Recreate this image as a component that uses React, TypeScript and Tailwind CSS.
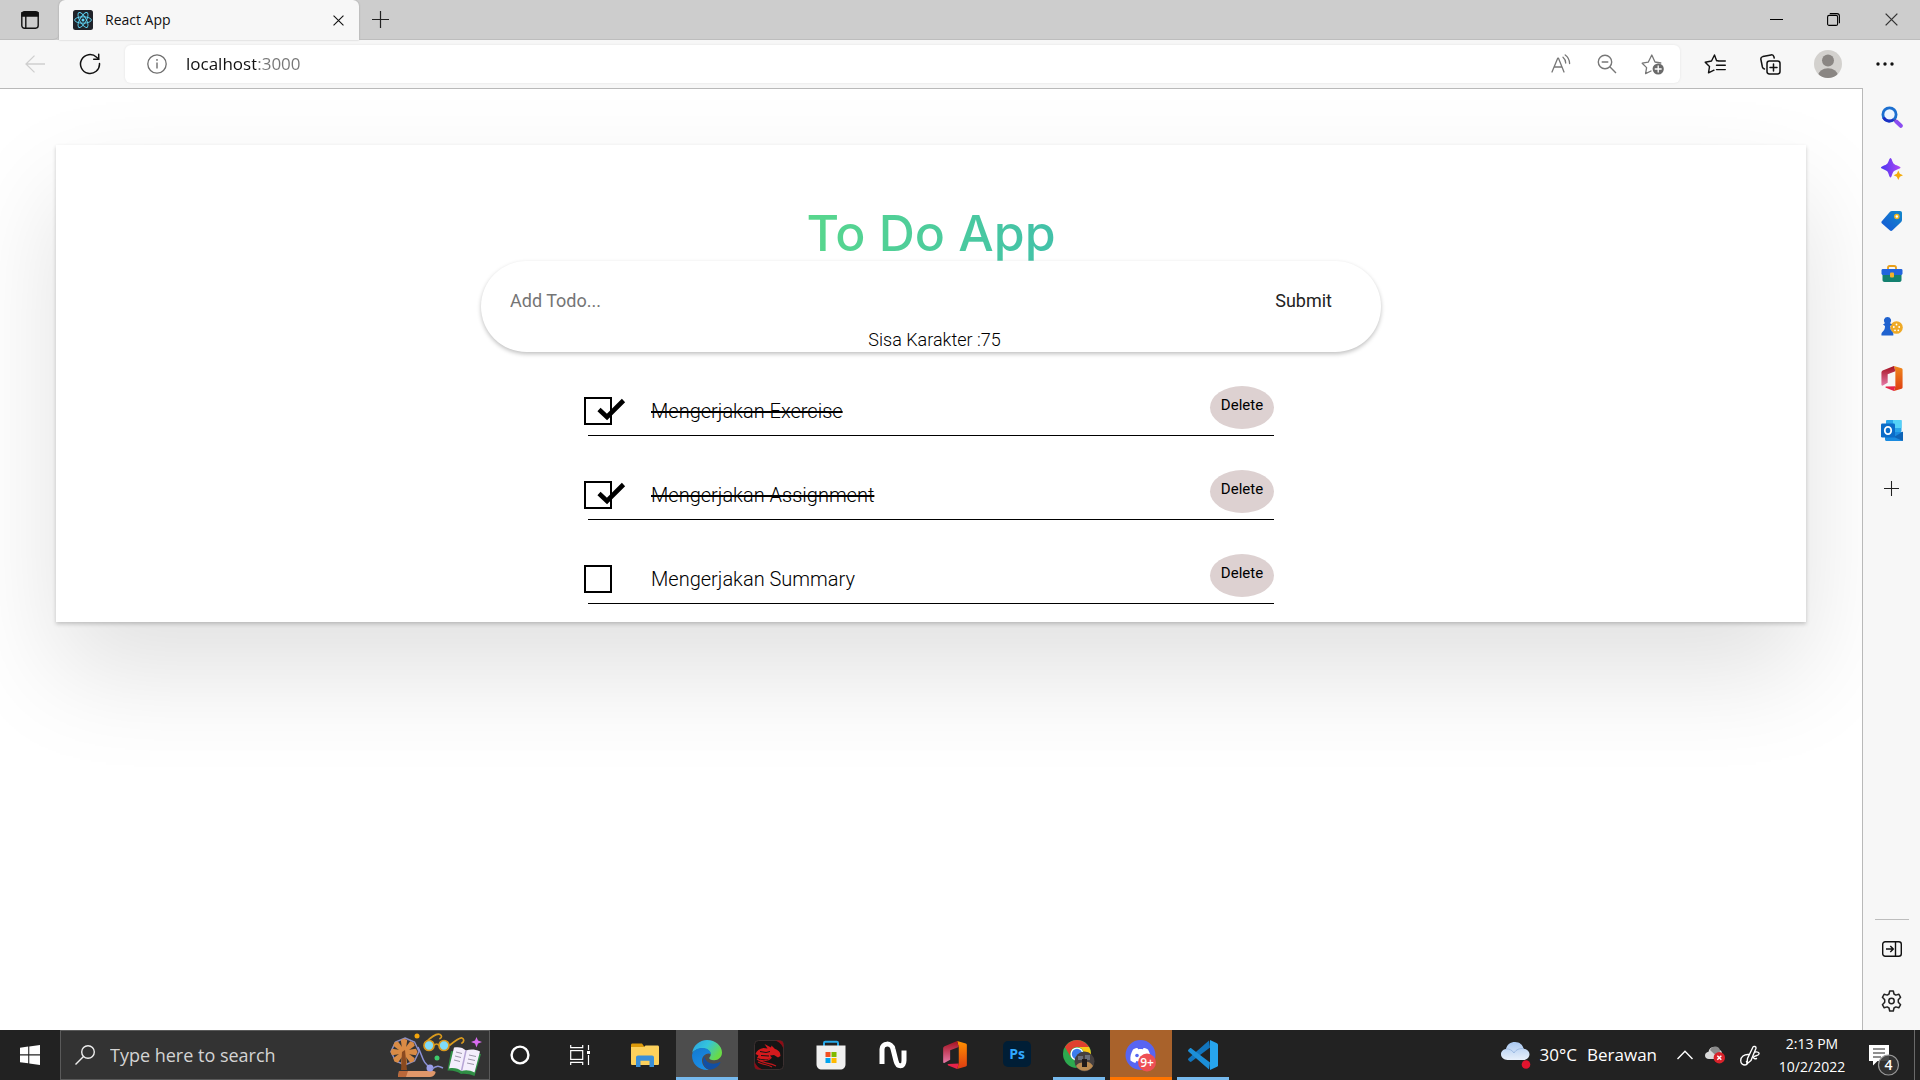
import { useState } from "react";
import type { ReactNode } from "react";

const uiFont = "font-['Open_Sans','Noto_Sans',sans-serif]";

/* ---------- Browser chrome icons ---------- */

function TabActionsIcon() {
  return (
    <svg width="18" height="18" viewBox="0 0 18 18" fill="none" stroke="#111" strokeWidth="1.4">
      <rect x="0.8" y="0.8" width="16.4" height="16.4" rx="2.6" />
      <path d="M1 1.6h16V5H1z" fill="#111" />
      <path d="M4.8 5v12" />
    </svg>
  );
}

function ReactLogo() {
  return (
    <svg width="20" height="20" viewBox="0 0 20 20" fill="none" stroke="#61dafb" strokeWidth="0.9">
      <rect width="20" height="20" rx="2.5" fill="#20232a" stroke="none" />
      <circle cx="10" cy="10" r="1.5" fill="#61dafb" stroke="none" />
      <ellipse cx="10" cy="10" rx="8.4" ry="3.2" />
      <ellipse cx="10" cy="10" rx="8.4" ry="3.2" transform="rotate(60 10 10)" />
      <ellipse cx="10" cy="10" rx="8.4" ry="3.2" transform="rotate(120 10 10)" />
    </svg>
  );
}

function CrossIcon({ size, stroke = "#111" }: { size: number; stroke?: string }) {
  return (
    <svg width={size} height={size} viewBox="0 0 12 12" fill="none" stroke={stroke} strokeWidth="1.2">
      <path d="M0.6 0.6l10.8 10.8M11.4 0.6L0.6 11.4" />
    </svg>
  );
}

function PlusIcon({ size }: { size: number }) {
  return (
    <svg width={size} height={size} viewBox="0 0 17 17" stroke="#222" strokeWidth="1.2">
      <path d="M8.5 0v17M0 8.5h17" />
    </svg>
  );
}

function BackIcon() {
  return (
    <svg width="20" height="18" viewBox="0 0 20 18" fill="none" stroke="#cfcfcf" strokeWidth="1.3">
      <path d="M20 9H1M9.5 0.6L1 9l8.500 8.400" />
    </svg>
  );
}

function RefreshIcon() {
  return (
    <svg width="22" height="22" viewBox="0 0 22 22" fill="none" stroke="#111" strokeWidth="1.5" strokeLinecap="round">
      <path d="M20.500 10.500A9.500 9.500 0 1 1 17.600 4.200L19.600 6" />
      <path d="M19.700 1.200V6.200H14.700" />
    </svg>
  );
}

function InfoIcon() {
  return (
    <svg width="20" height="20" viewBox="0 0 20 20" fill="none" stroke="#6e6e6e" strokeWidth="1.3">
      <circle cx="10" cy="10" r="9.200" />
      <path d="M10 8.600v6" strokeWidth="1.400" />
      <circle cx="10" cy="5.900" r="0.900" fill="#6e6e6e" stroke="none" />
    </svg>
  );
}

function ReadAloudIcon() {
  return (
    <svg width="20" height="20" viewBox="0 0 20 20" fill="none" stroke="#777" strokeWidth="1.3" strokeLinecap="round" strokeLinejoin="round">
      <path d="M1 18L6.700 4.200h0.800L13 18M3.200 13h7.700" />
      <path d="M12 3.200c1.500 1.300 2.600 3.300 2.700 5.800M14.200 1c2.600 1.900 4.300 4.800 4.400 8.500" />
    </svg>
  );
}

function ZoomOutIcon() {
  return (
    <svg width="20" height="20" viewBox="0 0 20 20" fill="none" stroke="#777" strokeWidth="1.4">
      <circle cx="8" cy="8" r="6.700" />
      <path d="M4.700 8h6.600M12.800 12.800L19 19" />
    </svg>
  );
}

function AddFavouriteIcon() {
  return (
    <svg width="24" height="22" viewBox="0 0 24 22" fill="none" stroke="#777" strokeWidth="1.300" strokeLinejoin="round" strokeLinecap="round">
      <path d="M10 18l-5.400 2.600 1-6L1.200 10.200l6-1L10.800 2l3.200 7 5.800 1" />
      <circle cx="17.200" cy="16" r="5.600" fill="#6a6a6a" stroke="none" />
      <path d="M17.200 13v6M14.200 16h6" stroke="#fff" />
    </svg>
  );
}

function FavouritesIcon() {
  return (
    <svg width="22" height="20" viewBox="0 0 22 20" fill="none" stroke="#111" strokeWidth="1.400" strokeLinejoin="round" strokeLinecap="round">
      <path d="M14 6.800h-1.400L10.500 1 7.500 7 1.200 8.200l4.300 4.400-1 6.300 5.500-2.700" />
      <path d="M14.500 7h6.800M12.500 11.300h8.800M12.500 15.600h8.800" />
    </svg>
  );
}

function CollectionsIcon() {
  return (
    <svg width="21" height="21" viewBox="0 0 21 21" fill="none" stroke="#111" strokeWidth="1.500" strokeLinejoin="round" strokeLinecap="round">
      <rect x="7" y="7" width="13" height="13" rx="2.400" />
      <path d="M13.500 10v7M10 13.500h7M4.500 15C3.300 14.800 2.700 14 2.400 13L0.900 5.500C0.600 4 1.300 3 2.800 2.600L11 0.900c1.500-.3 2.500.4 2.900 1.900l.3 1.200" />
    </svg>
  );
}

function ProfileIcon() {
  return (
    <svg width="28" height="28" viewBox="0 0 28 28">
      <clipPath id="avatar"><circle cx="14" cy="14" r="14" /></clipPath>
      <g clipPath="url(#avatar)">
        <rect width="28" height="28" fill="#d3d1ce" />
        <circle cx="14" cy="10.500" r="6" fill="#8a8683" />
        <ellipse cx="14" cy="26" rx="10" ry="7.800" fill="#8a8683" />
      </g>
    </svg>
  );
}

function DotsIcon() {
  return (
    <svg width="18" height="4" viewBox="0 0 18 4" fill="#111">
      <circle cx="2" cy="2" r="1.700" /><circle cx="9" cy="2" r="1.700" /><circle cx="16" cy="2" r="1.700" />
    </svg>
  );
}

/* ---------- Sidebar icons ---------- */

function SideSearch() {
  return (
    <svg width="22" height="22" viewBox="0 0 22 22" fill="none">
      <circle cx="8.500" cy="8.500" r="6.600" fill="#eef6ff" stroke="#1c6fd0" strokeWidth="2.800" />
      <path d="M2.500 11.500a6.600 6.600 0 0 0 10 2" stroke="#1c2fc4" strokeWidth="2.800" />
      <path d="M13.500 14l2 1.800" stroke="#3b3b6e" strokeWidth="2.400" />
      <path d="M15.300 15.500l4.500 4.300" stroke="#8b4cf0" strokeWidth="4" strokeLinecap="round" />
    </svg>
  );
}

function SideSparkle() {
  return (
    <svg width="22" height="22" viewBox="0 0 22 22">
      <defs><linearGradient id="spark" x1="0" y1="0" x2="1" y2="0"><stop offset="0" stopColor="#4a34f0" /><stop offset="1" stopColor="#b04af5" /></linearGradient></defs>
      <path d="M9.500 0c1.300 0 1.700 4 3.300 5.700S19.500 8.200 19.500 9.500s-5 2.200-6.700 3.800-2 6.200-3.300 6.200-1.700-4.600-3.300-6.200S0 10.800 0 9.500s4.600-2.100 6.200-3.800S8.200 0 9.500 0z" fill="url(#spark)" />
      <path d="M17.300 12.500l1.500 3.200 3.200 1.500-3.200 1.500-1.500 3.300-1.500-3.300-3.200-1.500 3.200-1.500z" fill="#f3ab0b" />
    </svg>
  );
}

function SideTag() {
  return (
    <svg width="22" height="22" viewBox="0 0 22 22">
      <defs><linearGradient id="tag" x1="1" y1="0" x2="0" y2="1"><stop offset="0" stopColor="#1388c9" /><stop offset="1" stopColor="#1557d8" /></linearGradient></defs>
      <path d="M11 1h8c1.400 0 2 .7 2 2v7c0 .8-.3 1.500-.8 2l-8.700 8.300c-.8.800-2 .8-2.800 0L1 13.500c-.8-.8-.8-1.700 0-2.500L9 1.800c.5-.5 1.200-.8 2-.8z" fill="url(#tag)" />
      <circle cx="15.800" cy="6.500" r="2" fill="#fff" stroke="#f0b51b" strokeWidth="1.500" />
    </svg>
  );
}

function SideToolbox() {
  return (
    <svg width="22" height="18" viewBox="0 0 22 18">
      <path d="M7 4.500V2.800C7 1.700 7.600 1 8.700 1h4.600C14.400 1 15 1.700 15 2.800v1.700" fill="none" stroke="#e9a01b" strokeWidth="1.800" />
      <path d="M1.500 9h19v6c0 1.300-.8 2-2 2h-15c-1.200 0-2-.7-2-2z" fill="#13806f" />
      <rect x="0.500" y="4" width="21" height="6" rx="1.400" fill="#2164dd" />
      <rect x="9" y="7.500" width="4" height="5" rx="1" fill="#f2b12a" />
    </svg>
  );
}

function SideGames() {
  return (
    <svg width="22" height="19" viewBox="0 0 22 19">
      <circle cx="15.500" cy="10.500" r="6.300" fill="#efaa27" />
      <g fill="#fff"><circle cx="15.500" cy="7.500" r="0.900" /><circle cx="12.800" cy="10" r="0.900" /><circle cx="18.200" cy="10" r="0.900" /><circle cx="14" cy="13.300" r="0.900" /><circle cx="17.300" cy="13.300" r="0.900" /></g>
      <path d="M6.500 0a3.700 3.700 0 0 1 2.600 6.300L11 7.500 9 9c0 3 .8 4.500 2.500 6 .9.900 1 2 .8 3.500H.5C.300 17 .500 16 1.400 15 3.200 13.500 4 12 4 9L2 7.500l1.900-1.200A3.700 3.700 0 0 1 6.500 0z" fill="#1f62cf" />
    </svg>
  );
}

function OfficeIcon({ id, dark }: { id: string; dark?: boolean }) {
  return (
    <svg width={dark ? "24" : "22"} height={dark ? "28" : "25"} viewBox="0 0 22 26">
      <defs>
        <linearGradient id={id} x1="0" y1="0" x2="0" y2="1"><stop offset="0" stopColor={dark ? "#ff9100" : "#f08a1c"} /><stop offset="1" stopColor="#dd3b12" /></linearGradient>
        <linearGradient id={id + "l"} x1="0" y1="0" x2="0" y2="1"><stop offset="0" stopColor="#a5101f" /><stop offset="1" stopColor="#e57aa8" /></linearGradient>
      </defs>
      <path d="M13 0l8 2.300c.6.200 1 .6 1 1.300v18.800c0 .7-.4 1.100-1 1.300L13 26l1.500-5V5.500z" fill={"url(#" + id + ")"} />
      <path d="M13 0l1.500 5.500L6.500 8.500v9L1 20.500c-.7 0-1-.6-1-1.200V7c0-1 .4-1.700 1.300-2.200z" fill={"url(#" + id + "l)"} />
      <path d="M14.500 21L13 26l-8.300-3.300c-.7-.3-.7-1 0-1.300z" fill="#e6234a" />
    </svg>
  );
}

function SideOutlook() {
  return (
    <svg width="22" height="21" viewBox="0 0 22 21">
      <rect x="5" y="0" width="15.500" height="12" rx="1" fill="#2aa5ea" />
      <rect x="12" y="0" width="8.500" height="8" fill="#54d2f7" />
      <path d="M4 12h18v7.500c0 .8-.6 1.500-1.500 1.500h-15C4.600 21 4 20.300 4 19.500z" fill="#1a8be0" />
      <path d="M22 11.500L13 17l9 4z" fill="#0f64b6" />
      <rect x="0" y="3.500" width="14" height="14" rx="1.300" fill="#0b6cc8" />
      <ellipse cx="7" cy="10.500" rx="3.200" ry="3.600" fill="none" stroke="#fff" strokeWidth="1.800" />
    </svg>
  );
}

function HideSidebarIcon() {
  return (
    <svg width="20" height="16" viewBox="0 0 20 16" fill="none" stroke="#111" strokeWidth="1.400">
      <rect x="0.700" y="0.700" width="18.600" height="14.600" rx="2.500" />
      <path d="M13.500 1v14M4 8h7M8.300 5l3 3-3 3" />
    </svg>
  );
}

function SettingsIcon() {
  return (
    <svg width="21" height="22" viewBox="0 0 21 22" fill="none" stroke="#222" strokeWidth="1.500" strokeLinejoin="round">
      <path d="M8.700 1h3.600l.7 3 1.800 1.100 3-.9 1.800 3.100L17.300 9.800v2.400l2.300 2.500-1.800 3.100-3-.9L13 18l-.7 3H8.700L8 18l-1.800-1.100-3 .9-1.800-3.100 2.300-2.500V9.800L1.400 7.300l1.800-3.100 3 .9L8 4z" />
      <circle cx="10.500" cy="11" r="2.700" />
    </svg>
  );
}

/* ---------- Taskbar icons ---------- */

function WindowsIcon() {
  return (
    <svg width="20" height="20" viewBox="0 0 20 20" fill="#fff">
      <path d="M0 2.700l8.200-1.100v7.700H0zM9.300 1.400L20 0v9.300H9.300zM0 10.400h8.200v7.900L0 17.200zM9.300 10.400H20V20L9.300 18.500z" />
    </svg>
  );
}

function TaskSearchIcon() {
  return (
    <svg width="20" height="20" viewBox="0 0 20 20" fill="none" stroke="#eee" strokeWidth="1.400">
      <circle cx="13" cy="7" r="6.300" /><path d="M8.500 11.500L0.500 19.500" />
    </svg>
  );
}

function SearchArt() {
  const spokes = [0, 45, 90, 135, 180, 225, 270, 315];
  return (
    <svg width="92" height="44" viewBox="0 0 92 44" fill="none">
      <path d="M14 5l9.500 4L28 18.500 23.500 28 14 32 4.500 28 0 18.500 4.500 9z" stroke="#8d8fc4" strokeWidth="1.500" transform="translate(1 0)" />
      <g transform="translate(14 19)">
        {spokes.map((a) => (
          <path key={a} d="M-1.500 0L-3.200 -12l3.200 -1.500 3.200 1.500L1.500 0z" fill="#d98b45" transform={"rotate(" + a + ")"} />
        ))}
      </g>
      <path d="M12 19l3-2 2 20h-6z" fill="#8a4a20" />
      <path d="M28 14c5 10 4 16 14 22" stroke="#8b91d6" strokeWidth="1.500" />
      <path d="M9 38h33c4 0 4 1 3 3s-3 3-5 3H8z" fill="#e0986a" />
      <path d="M9 38l-1 6h8l2-6z" fill="#b9683a" />
      <circle cx="40" cy="35" r="3.500" fill="#9a9ee8" />
      <path d="M42 36c5-4 7-3 11-1" stroke="#8b91d6" strokeWidth="1.500" />
      <circle cx="27" cy="3" r="2.500" fill="#f5a60c" />
      <circle cx="47" cy="25" r="2.500" fill="#3ecb6c" />
      <path d="M35 10C40 5 47 0 50 1.500c2 1 2 3 0 4M60 12c5-4 10-8 12-7 2.500 1 2 4 0 5" stroke="#d99a1e" strokeWidth="1.700" strokeLinecap="round" />
      <circle cx="39" cy="12.500" r="5" fill="#7fdcf8" stroke="#d99a1e" strokeWidth="1.700" />
      <circle cx="54" cy="12.500" r="5" fill="#7fdcf8" stroke="#d99a1e" strokeWidth="1.700" />
      <path d="M44 12.500c2-2 3-2 5 0" stroke="#d99a1e" strokeWidth="1.700" />
      <path d="M61 18l-3.500 19.500c5-.5 10 1 13.500 3.500 4-.5 9 0 13.500 2L91 21z" fill="#2f8f45" />
      <path d="M64 14.500c5-1 9 0 12 3 4-1.500 9-1.500 14 1l-5.500 21c-4.500-2.500-9-3-13-1.500-3-2.500-8-3.500-12.500-2.500z" fill="#f4eefc" />
      <path d="M76 17.500L71.500 38" stroke="#b7a5d6" strokeWidth="1.500" />
      <path d="M66 19l6 1.500M65 23l6 1.500M64 27l6 1.500M79 22l7 1.500M78 26l7 1.500M77 30l7 1.500" stroke="#9b95a8" />
      <path d="M86.500 4l1.500 3.500 4 1.500-4 1.500-1.500 4-1.500-4-4-1.500 4-1.500z" fill="#d86cf0" />
    </svg>
  );
}

function CortanaIcon() {
  return (
    <svg width="20" height="20" viewBox="0 0 20 20" fill="none"><circle cx="10" cy="10" r="8.400" stroke="#fff" strokeWidth="2.400" /></svg>
  );
}

function TaskViewIcon() {
  return (
    <svg width="20" height="20" viewBox="0 0 20 20" fill="none" stroke="#fff" strokeWidth="1.200">
      <rect x="0.700" y="5.600" width="12" height="8.800" />
      <path d="M0.700 0v2.600h12V0M0.700 20v-2.600h12V20M18.500 0v5M18.500 10v10" />
      <path d="M17 6h3v3h-3z" fill="#fff" stroke="none" />
    </svg>
  );
}

function ExplorerIcon() {
  return (
    <svg width="28" height="24" viewBox="0 0 28 24">
      <path d="M0 2c0-1 .6-1.500 1.500-1.500H11L13.500 4H0z" fill="#dd9a0a" />
      <path d="M0 4h13l1.500-1.500h12c1 0 1.500.6 1.500 1.500v16.500c0 1-.5 1.500-1.500 1.500h-25C.5 22 0 21.500 0 20.500z" fill="#fdd15c" />
      <path d="M5 24V14.500c0-1.200.8-2 2-2h14c1.200 0 2 .8 2 2V24h-4.500v-6.300H9.500V24z" fill="#3a8fd8" />
    </svg>
  );
}

function EdgeIcon() {
  return (
    <svg width="30" height="30" viewBox="0 0 30 30">
      <defs>
        <linearGradient id="edgeTop" x1="0" y1="0" x2="1" y2="0.500"><stop offset="0" stopColor="#2b9fe0" /><stop offset="0.500" stopColor="#34c4dc" /><stop offset="1" stopColor="#69db46" /></linearGradient>
        <linearGradient id="edgeBody" x1="0" y1="0" x2="0.400" y2="1"><stop offset="0" stopColor="#1379cf" /><stop offset="1" stopColor="#1b8ee6" /></linearGradient>
      </defs>
      <path d="M0.200 13C1.200 5.500 7.500 0 15 0c8.500 0 15 6 15 12.500 0 4.700-3.500 7.700-7.800 7.700-3.400 0-5-1-5-2.200 0-.8 1.500-1.300 1.500-3.600 0-3.200-3.700-5.900-8-5.900-5 0-8.800 2-10.500 4.500z" fill="url(#edgeTop)" />
      <path d="M0 15.500C.2 10.500 5.500 8 10.500 8c5 0 8.400 3 8.400 6.200-3.400-2.400-8.900 1.300-8.900 6.300 0 5 4 9 7.500 9.300C7.500 31 0 24.500 0 15.500z" fill="url(#edgeBody)" />
      <path d="M12.500 16c-4 6 .5 14 6.500 13.500 4-.6 7.500-3.200 9.300-6.600.3-.6-.2-1-.8-.7-6.500 3.300-14.500.8-15-6.200z" fill="#124fa3" />
    </svg>
  );
}

function DragonIcon() {
  return (
    <svg width="30" height="30" viewBox="0 0 30 30">
      <rect x="0.500" y="0.500" width="29" height="29" rx="4" fill="#151515" stroke="#3b3030" />
      <path d="M21 .5h4.500c2.500 0 4 1.500 4 4V9C28.500 5 25 1.500 21 .5zM9 29.500H4.500c-2.500 0-4-1.500-4-4V21c1 4 4.500 7.500 8.500 8.500z" fill="#8d0d16" />
      <path d="M1.500 14c1-3 4-5.500 8-6l4 .5-3-4.500 6.500 3.500 .5-2 3.500 3.500c2 .5 4 2 5 4l.5 3-2.500 1.500-4-2.500-4 .5 2 2.500-6 1.500-5-.5-4-1 1.500-2.500z" fill="#d51a1d" />
      <path d="M3 19c6 5 12 3 19 7M4 22c5 3 9 2 14 5M6 20c3 1 8 1 11-2" stroke="#c2171b" strokeWidth="1.200" fill="none" />
      <path d="M6 11.500l6 1 4-1M7 15.500l8 .5" stroke="#151515" fill="none" />
    </svg>
  );
}

function StoreIcon() {
  return (
    <svg width="30" height="30" viewBox="0 0 30 30">
      <path d="M8 6V3c0-.8.500-1.300 1.300-1.300h11.400c.8 0 1.300.5 1.300 1.300v3" fill="none" stroke="#27a9ea" strokeWidth="2" />
      <path d="M.5 5.500h29V24c0 3.500-2 5.500-5.500 5.500H6C2.500 29.500.5 27.500.5 24z" fill="#f0f0f0" />
      <path d="M9.500 12h5v5h-5z" fill="#f25022" /><path d="M15.500 12h5v5h-5z" fill="#7fba00" />
      <path d="M9.500 18h5v5h-5z" fill="#00a4ef" /><path d="M15.500 18h5v5h-5z" fill="#ffb900" />
    </svg>
  );
}

function WaveIcon() {
  return (
    <svg width="28" height="28" viewBox="0 0 28 28" fill="none" stroke="#fff" strokeWidth="5">
      <path d="M3 23V8c0-6 9.500-7 11 0l3 12c1.500 6.500 8 6.500 8-.5V9.500" />
    </svg>
  );
}

function PhotoshopIcon() {
  return (
    <svg width="28" height="26" viewBox="0 0 28 26">
      <rect width="28" height="26" rx="5" fill="#001e36" />
      <text x="14" y="18" textAnchor="middle" fontFamily="Open Sans" fontWeight="700" fontSize="14" fill="#31a8ff">Ps</text>
    </svg>
  );
}

function ChromeIcon() {
  return (
    <svg width="32" height="32" viewBox="0 0 32 32">
      <circle cx="14" cy="14" r="14" fill="#2da94f" />
      <path d="M1.900 7A14 14 0 0 1 26.100 7H14a7 7 0 0 0-6 10.500z" fill="#e0402f" />
      <path d="M26.100 7A14 14 0 0 1 14 28l6-10.500A7 7 0 0 0 14 7z" fill="#fbc816" />
      <circle cx="14" cy="14" r="6.600" fill="#fff" /><circle cx="14" cy="14" r="5.200" fill="#3b7ded" />
      <circle cx="21.500" cy="21.500" r="10" fill="#454040" />
      <path d="M13 26c3-4 5-3 8-4s7 0 9 4a10 10 0 0 1-17 0z" fill="#b98a52" />
      <path d="M15 16h5v4h-5zM22 15h5v5h-5z" fill="#6b6f78" />
      <path d="M19 19h5v8h-5z" fill="#1f1a1a" />
    </svg>
  );
}

function DiscordIcon() {
  return (
    <svg width="32" height="32" viewBox="0 0 32 32">
      <circle cx="15.500" cy="15" r="15" fill="#5865f2" />
      <path d="M8 9.500c2-1.200 3.500-1.500 4.500-1.500l.6 1.200c1.600-.2 3.200-.2 4.800 0L18.500 8c1 0 2.500.3 4.500 1.500 2 3.500 3 7 2.500 11-1.500 1.200-3 2-4.800 2.400l-1.100-1.900c-2.700.7-5.500.7-8.200 0l-1.100 1.900C8.500 22.500 7 21.700 5.500 20.500 5 16.500 6 13 8 9.500z" fill="#fff" />
      <circle cx="12" cy="15.500" r="1.800" fill="#5865f2" />
      <circle cx="22" cy="22.500" r="9" fill="#ee4f54" />
      <text x="22" y="27" textAnchor="middle" fontFamily="Open Sans" fontWeight="600" fontSize="12" fill="#fff">9+</text>
    </svg>
  );
}

function CodeIcon() {
  return (
    <svg width="30" height="30" viewBox="0 0 30 30">
      <path d="M22 7.500L3.500 21.600c-.6.500-1.300.4-1.800-.1L.4 20.300c-.5-.5-.5-1.300 0-1.800L21 .4z" fill="#1275bd" />
      <path d="M22 22.500L3.500 8.400c-.6-.5-1.300-.4-1.800.1L.4 9.700c-.5.500-.5 1.300 0 1.800L21 29.600z" fill="#1c8fd8" />
      <path d="M22 0l7 3.200c.6.300 1 .9 1 1.600v20.400c0 .7-.4 1.300-1 1.600L22 30z" fill="#27a5ee" />
    </svg>
  );
}

function WeatherIcon() {
  return (
    <svg width="30" height="28" viewBox="0 0 30 28">
      <defs><linearGradient id="cloud" x1="0" y1="0" x2="0" y2="1"><stop offset="0" stopColor="#a9c8f0" /><stop offset="1" stopColor="#e8f0fb" /></linearGradient></defs>
      <path d="M6.500 19C3 19 0 16.500 0 13.300 0 10.500 2.200 8.300 5 8 6 3.500 9.500 1 14 1c4.600 0 7.700 2.800 8.600 6.700C26 8 28.500 10.500 28.500 13.300c0 3.200-2.800 5.700-6.500 5.700z" fill="url(#cloud)" />
      <path d="M5 8c3-.5 6 1 8 4 2-3.500 6-5 9.600-4.300" stroke="#9dbbe3" fill="none" />
      <circle cx="25" cy="23.500" r="4.300" fill="#e3142e" />
    </svg>
  );
}

function ChevronUpIcon() {
  return (
    <svg width="16" height="10" viewBox="0 0 16 10" fill="none" stroke="#fff" strokeWidth="1.400"><path d="M0.500 9L8 1.200 15.500 9" /></svg>
  );
}

function CloudErrorIcon() {
  return (
    <svg width="20" height="18" viewBox="0 0 20 18">
      <path d="M4 13c-2.500 0-4-1.500-4-3.500S1.500 6 3.500 5.800C4 3 6 1 9 1c2.500 0 4 1 5 3 2 .2 3 1.500 3 3.500V13z" fill="#d9d9d9" />
      <path d="M5 4c1.500-3 4-4 6-3.500 2.500.3 4 2.500 4.300 4.500l-4 5z" fill="#8b8b8b" />
      <circle cx="14.300" cy="11.800" r="5.700" fill="#d9222a" />
      <path d="M12.300 9.800l4 4M16.300 9.800l-4 4" stroke="#fff" strokeWidth="1.500" />
    </svg>
  );
}

function PenIcon() {
  return (
    <svg width="20" height="21" viewBox="0 0 20 21" fill="none" stroke="#fff" strokeWidth="1.400" strokeLinejoin="round" strokeLinecap="round">
      <path d="M7.500 13.500L13 2c.6-1.200 3.500-.5 3 1.300L11 15.500 7 18.800z" />
      <path d="M9 9.500C4 9 .7 12 .7 15.500c0 3 2.300 4.500 4.300 4.500 2.300 0 3-2 1.500-3.500M15 7c2.500-.5 4.300.5 4 2-.3 2-5.500 1.500-5.500 3.500 0 1 1.500 1.500 3 1" />
    </svg>
  );
}

function NotificationsIcon() {
  return (
    <svg width="32" height="32" viewBox="0 0 32 32">
      <path d="M0 0h20v16H8.500L4 20.500V16H0z" fill="#fff" />
      <path d="M4 4h12M4 8h12M4 12h8" stroke="#222" strokeWidth="1.200" />
      <circle cx="19.500" cy="20" r="10" fill="#333" fillOpacity="0.900" stroke="#9a9a9a" strokeWidth="1.200" />
      <text x="19.500" y="25" textAnchor="middle" fontFamily="Open Sans" fontWeight="600" fontSize="14" fill="#fff">4</text>
    </svg>
  );
}

/* ---------- Layout ---------- */

function IconButton({ label, className, children }: { label: string; className: string; children: ReactNode }) {
  return (
    <button type="button" aria-label={label} className={"flex shrink-0 items-center justify-center " + className}>
      {children}
    </button>
  );
}

function TabStrip() {
  return (
    <div className="flex h-10 items-stretch bg-[#cdcdcd]">
      <div className="flex w-[59px] items-center justify-center rounded-br-md border-b border-[#bdbdbd]">
        <IconButton label="Tab actions menu" className="h-8 w-8"><TabActionsIcon /></IconButton>
      </div>
      <div className="flex w-[300px] items-center rounded-t-md bg-[#f7f7f7] pl-[14px] pr-[9px] shadow-[0_0_2px_rgba(0,0,0,0.25)]">
        <ReactLogo />
        <span className="ml-3 flex-1 text-sm text-[#111]">React App</span>
        <IconButton label="Close tab" className="h-6 w-6"><CrossIcon size={11} /></IconButton>
      </div>
      <div className="flex flex-1 items-center justify-between border-b border-[#bdbdbd] pl-[5px]">
        <IconButton label="New tab" className="h-8 w-8"><PlusIcon size={17} /></IconButton>
        <div className="flex">
          <IconButton label="Minimize" className="h-8 w-[58px]">
            <svg width="13" height="1" viewBox="0 0 13 1"><path d="M0 0h13v1H0z" fill="#000" /></svg>
          </IconButton>
          <IconButton label="Restore" className="h-8 w-[57px]">
            <svg width="13" height="13" viewBox="0 0 13 13" fill="none" stroke="#000" strokeWidth="1.100">
              <rect x="0.600" y="2.400" width="10" height="10" rx="1.500" /><path d="M2.800.6h7.200c1.500 0 2.400 1 2.400 2.400v7.200" />
            </svg>
          </IconButton>
          <IconButton label="Close window" className="h-8 w-[58px]"><CrossIcon size={13} stroke="#333" /></IconButton>
        </div>
      </div>
    </div>
  );
}

function Toolbar() {
  return (
    <div className="flex h-12 items-center bg-[#f7f7f7]">
      <IconButton label="Back" className="ml-[19px] h-8 w-8"><BackIcon /></IconButton>
      <IconButton label="Refresh" className="ml-[23px] h-8 w-8"><RefreshIcon /></IconButton>
      <div className="ml-[19px] flex h-[38px] flex-1 items-center rounded-md bg-white pl-5 pr-[15px] shadow-[0_0_3px_rgba(0,0,0,0.08)]">
        <IconButton label="View site information" className="h-6 w-6"><InfoIcon /></IconButton>
        <input
          aria-label="Address"
          defaultValue="localhost:3000"
          className="ml-[17px] min-w-0 flex-1 bg-[linear-gradient(90deg,#111_70px,#767676_70px)] bg-clip-text text-[17px] leading-6 text-transparent outline-none"
        />
        <div className="flex items-center gap-[22px]">
          <IconButton label="Read aloud" className="h-6 w-6"><ReadAloudIcon /></IconButton>
          <IconButton label="Zoom out" className="h-6 w-6"><ZoomOutIcon /></IconButton>
          <IconButton label="Add to favorites" className="h-6 w-6"><AddFavouriteIcon /></IconButton>
        </div>
      </div>
      <IconButton label="Favorites" className="ml-[19px] h-8 w-8"><FavouritesIcon /></IconButton>
      <IconButton label="Collections" className="ml-[23px] h-8 w-8"><CollectionsIcon /></IconButton>
      <IconButton label="Profile" className="ml-[26px] h-8 w-8"><ProfileIcon /></IconButton>
      <IconButton label="Settings and more" className="ml-[25px] mr-[19px] h-8 w-8"><DotsIcon /></IconButton>
    </div>
  );
}

function Sidebar() {
  return (
    <aside className="flex w-[57px] shrink-0 flex-col items-center justify-between bg-[#f7f7f7]">
      <div className="flex flex-col gap-5 pt-[13px]">
        <IconButton label="Search" className="h-8 w-8"><SideSearch /></IconButton>
        <IconButton label="Discover" className="h-8 w-8"><SideSparkle /></IconButton>
        <IconButton label="Shopping" className="h-8 w-8"><SideTag /></IconButton>
        <IconButton label="Tools" className="mt-px h-8 w-8"><SideToolbox /></IconButton>
        <IconButton label="Games" className="h-8 w-8"><SideGames /></IconButton>
        <IconButton label="Office" className="h-8 w-8"><OfficeIcon id="sideOffice" /></IconButton>
        <IconButton label="Outlook" className="h-8 w-8"><SideOutlook /></IconButton>
        <IconButton label="Customize" className="mt-[6px] h-8 w-8"><PlusIcon size={15} /></IconButton>
      </div>
      <div className="flex flex-col items-center gap-5 border-t border-[#bdbdbd] px-[1px] pb-[13px] pt-[13px]">
        <IconButton label="Hide sidebar" className="h-8 w-8"><HideSidebarIcon /></IconButton>
        <IconButton label="Settings" className="h-8 w-8"><SettingsIcon /></IconButton>
      </div>
    </aside>
  );
}

const initialTodos = [
  { id: "exercise", text: "Mengerjakan Exercise", done: true },
  { id: "assignment", text: "Mengerjakan Assignment", done: true },
  { id: "summary", text: "Mengerjakan Summary", done: false },
];

function TodoApp() {
  const [todos, setTodos] = useState(initialTodos);
  const [draft, setDraft] = useState("");

  const toggle = (id: string) => setTodos(todos.map((t) => (t.id === id ? { ...t, done: !t.done } : t)));
  const remove = (id: string) => setTodos(todos.filter((t) => t.id !== id));

  return (
    <section className="flex flex-col items-center bg-white pb-[18px] pt-[60px] font-[Roboto,sans-serif] shadow-[0_2px_4px_rgba(0,0,0,0.2),0_50px_100px_rgba(0,0,0,0.12)]">
      <h1 className="bg-gradient-to-r from-[#58d78c] to-[#42c1a9] bg-clip-text font-[Inter,sans-serif] text-[50px] font-medium leading-[56px] text-transparent">
        To Do App
      </h1>
      <form
        onSubmit={(e) => {
          e.preventDefault();
          if (!draft) return;
          setTodos([...todos, { id: String(Date.now()), text: draft, done: false }]);
          setDraft("");
        }}
        className="flex w-[900px] max-w-full flex-col rounded-full bg-white shadow-[0_2px_4px_rgba(0,0,0,0.25)]"
      >
        <div className="flex h-[67px] items-center pl-[29px] pr-[49px] pt-[13px] text-lg">
          <input
            aria-label="Add Todo"
            placeholder="Add Todo..."
            maxLength={75}
            value={draft}
            onChange={(e) => setDraft(e.target.value)}
            className="min-w-0 flex-1 outline-none placeholder:text-[#757575]"
          />
          <button type="submit" className="text-[#222]">Submit</button>
        </div>
        <p className="pl-[7px] text-center text-lg font-light leading-6 text-black">Sisa Karakter :{75 - draft.length}</p>
      </form>
      <ul className="mt-[34px] flex w-[686px] max-w-full flex-col gap-[34px]">
        {todos.map((t) => (
          <li key={t.id} className="flex h-[50px] items-end justify-between border-b border-black pb-[6px]">
            <label className="-ml-1 mb-1 flex items-center">
              <span className="relative flex">
                <input
                  type="checkbox"
                  checked={t.done}
                  onChange={() => toggle(t.id)}
                  className="h-7 w-7 appearance-none border-2 border-black bg-white"
                />
                {t.done && (
                  <svg className="pointer-events-none absolute left-[13px] top-0" width="29" height="24" viewBox="0 0 29 24" fill="none" stroke="#000" strokeWidth="4.600">
                    <path d="M2 12.500l8 7.500L26.500 3.500" />
                  </svg>
                )}
              </span>
              <span className={t.done ? "ml-[39px] text-xl font-light line-through decoration-2" : "ml-[39px] text-xl font-light"}>{t.text}</span>
            </label>
            <button
              type="button"
              onClick={() => remove(t.id)}
              className="h-[43px] w-16 rounded-[50%] bg-[#ddd1d1] pb-1 text-[15px] text-black"
            >
              Delete
            </button>
          </li>
        ))}
      </ul>
    </section>
  );
}

function TaskButton({ label, className, children }: { label: string; className?: string; children: ReactNode }) {
  return (
    <button type="button" aria-label={label} className={"flex w-[62px] shrink-0 items-stretch justify-center " + (className ?? "")}>
      {children}
    </button>
  );
}

function Taskbar() {
  return (
    <footer className="flex h-[50px] items-stretch bg-[#222] text-white">
      <IconButton label="Start" className="w-[60px]"><WindowsIcon /></IconButton>
      <label className="flex w-[430px] items-center border border-[#5a5a5a] bg-[#333] pl-[14px] pr-[7px]">
        <TaskSearchIcon />
        <input
          aria-label="Type here to search"
          placeholder="Type here to search"
          className="ml-[15px] min-w-0 flex-1 text-lg outline-none placeholder:text-[#d4d4d4]"
        />
        <SearchArt />
      </label>
      <IconButton label="Cortana" className="w-[60px]"><CortanaIcon /></IconButton>
      <IconButton label="Task view" className="mr-1 w-[60px]"><TaskViewIcon /></IconButton>
      <TaskButton label="File Explorer"><span className="flex items-center"><ExplorerIcon /></span></TaskButton>
      <TaskButton label="Microsoft Edge" className="bg-[#4d4d4d]"><span className="flex w-full items-center justify-center border-b-3 border-[#76b9ed] pt-[3px]"><EdgeIcon /></span></TaskButton>
      <TaskButton label="Dragon Center"><span className="flex items-center"><DragonIcon /></span></TaskButton>
      <TaskButton label="Microsoft Store"><span className="flex items-center"><StoreIcon /></span></TaskButton>
      <TaskButton label="Notes"><span className="flex items-center"><WaveIcon /></span></TaskButton>
      <TaskButton label="Office"><span className="flex items-center"><OfficeIcon id="taskOffice" dark /></span></TaskButton>
      <TaskButton label="Photoshop"><span className="flex items-center pb-[2px]"><PhotoshopIcon /></span></TaskButton>
      <TaskButton label="Chrome"><span className="flex w-[52px] items-center justify-center border-b-3 border-[#76b9ed] pt-1"><ChromeIcon /></span></TaskButton>
      <TaskButton label="Discord" className="bg-[#a9622b]"><span className="flex w-full items-center justify-center border-b-3 border-[#ff7400] pt-1"><DiscordIcon /></span></TaskButton>
      <TaskButton label="Visual Studio Code"><span className="flex w-[52px] items-center justify-center border-b-3 border-[#76b9ed] pt-[3px]"><CodeIcon /></span></TaskButton>
      <div className="ml-auto flex items-center">
        <button type="button" className="flex items-center text-[17px]">
          <WeatherIcon />
          <span className="ml-[9px]">30°C</span>
          <span className="ml-[10px]">Berawan</span>
        </button>
        <IconButton label="Show hidden icons" className="ml-5 h-8 w-4"><ChevronUpIcon /></IconButton>
        <IconButton label="OneDrive" className="ml-3 h-8 w-5"><CloudErrorIcon /></IconButton>
        <IconButton label="Ink workspace" className="ml-[15px] h-8 w-5"><PenIcon /></IconButton>
        <time className="ml-[18px] w-[68px] whitespace-nowrap text-center text-sm leading-[23px]">
          2:13 PM<br />10/2/2022
        </time>
        <IconButton label="Notifications" className="ml-[23px] mr-[13px] mt-[11px] h-8 w-8"><NotificationsIcon /></IconButton>
        <span className="h-full w-[6px] border-l border-[#6a6a6a]" />
      </div>
    </footer>
  );
}

export default function App() {
  return (
    <div className={"flex min-h-screen flex-col bg-white " + uiFont}>
      <header>
        <TabStrip />
        <Toolbar />
      </header>
      <div className="flex flex-1 bg-[#f7f7f7]">
        <main className="min-w-0 flex-1 overflow-hidden border-r border-t border-[#b9b9b9] bg-white p-14">
          <TodoApp />
        </main>
        <Sidebar />
      </div>
      <Taskbar />
    </div>
  );
}
